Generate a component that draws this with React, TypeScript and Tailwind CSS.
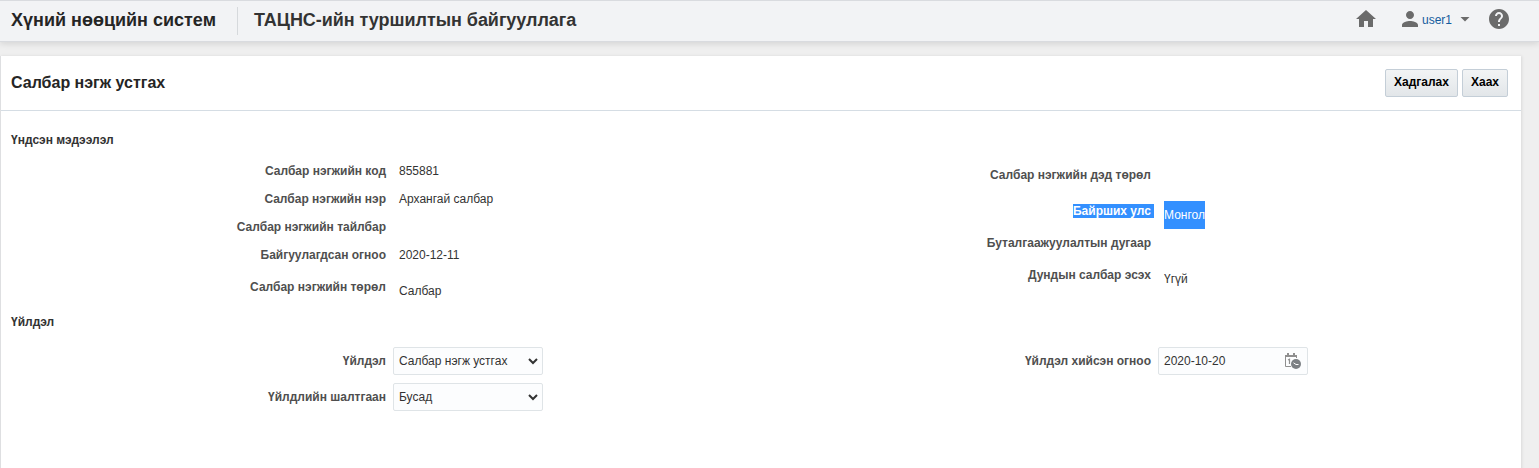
import type { ReactNode } from "react";

function Field({ label, children, height = "h-7", valueClass = "" }: {
  label: string;
  children?: ReactNode;
  height?: string;
  valueClass?: string;
}) {
  return (
    <div className={`flex items-center ${height}`}>
      <div className="flex w-[385px] shrink-0 justify-end">
        <span className="font-bold text-[#4f4f4f]">{label}</span>
      </div>
      <div className={`ml-[13px] whitespace-nowrap text-[#333333] ${valueClass}`}>{children}</div>
    </div>
  );
}

function Select({ value }: { value: string }) {
  return (
    <div className="-ml-1.5 flex h-7 w-[150px] items-center justify-between rounded-[2px] border border-[#dfe4e7] bg-[#fcfdfe] pl-[5px] pr-1">
      <span>{value}</span>
      <svg width="10" height="8" viewBox="0 0 10 8" fill="none" stroke="#333" strokeWidth="2">
        <path d="M1 2 L5 6 L9 2" />
      </svg>
    </div>
  );
}

function HomeIcon() {
  return (
    <svg className="mb-px" width="20" height="17" viewBox="2 3 20 17" fill="#6b6b6b">
      <path d="M10 20v-6h4v6h5v-8h3L12 3 2 12h3v8z" />
    </svg>
  );
}

function PersonIcon() {
  return (
    <svg className="ml-[26px]" width="16" height="16" viewBox="4 4 16 16" fill="#6b6b6b">
      <path d="M12 12c2.21 0 4-1.79 4-4s-1.79-4-4-4-4 1.79-4 4 1.79 4 4 4zm0 2c-2.67 0-8 1.34-8 4v2h16v-2c0-2.66-5.33-4-8-4z" />
    </svg>
  );
}

function HelpIcon() {
  return (
    <svg className="ml-[19px]" width="20" height="20" viewBox="2 2 20 20" fill="#6b6b6b">
      <path d="M12 2C6.48 2 2 6.48 2 12s4.48 10 10 10 10-4.48 10-10S17.52 2 12 2zm1 17h-2v-2h2v2zm2.07-7.75l-.9.92C13.45 12.9 13 13.5 13 15h-2v-.5c0-1.1.45-2.1 1.17-2.83l1.24-1.26c.37-.36.59-.86.59-1.41 0-1.1-.9-2-2-2s-2 .9-2 2H8c0-2.21 1.79-4 4-4s4 1.79 4 4c0 .88-.36 1.68-.93 2.25z" />
    </svg>
  );
}

function CalendarClockIcon() {
  return (
    <svg width="18" height="18" viewBox="0 0 18 18" fill="none">
      <path d="M7 14.5 H1.5 V3.5 H12.5 V6" stroke="#8f8f8f" />
      <path d="M1 4 H13" stroke="#8f8f8f" strokeWidth="2" />
      <path d="M4 1 V4 M10 1 V4" stroke="#8f8f8f" strokeWidth="2" />
      <path d="M4 8 L5.5 7.2 V12" stroke="#8f8f8f" strokeWidth="1.2" />
      <circle cx="12" cy="12" r="5.6" fill="#fcfdfe" />
      <circle cx="12" cy="12" r="5" fill="#7c8084" />
      <path d="M9.5 10.8 L12 12.5 H14.5" stroke="#fff" />
    </svg>
  );
}

export default function App() {
  return (
    <div className="h-[468px] w-[1539px] overflow-hidden bg-[#efefef] font-['Liberation_Sans',Arial,sans-serif] text-[12px] leading-[14px] text-[#333333]">
      <header className="flex h-[42px] items-center border-y border-[#d9dbdf] bg-[#f2f3f5] pl-[11px] shadow-[0_2px_6px_rgba(0,0,0,0.11)]">
        <div className="flex h-7 w-[227px] shrink-0 items-center border-r border-[#d6d9dc] pb-0.5">
          <h1 className="whitespace-nowrap text-[18px] font-bold leading-5 text-[#252525]">Хүний нөөцийн систем</h1>
        </div>
        <h2 className="ml-4 whitespace-nowrap pb-0.5 text-[18px] font-bold leading-5 tracking-[-0.04px] text-[#333333]">ТАЦНС-ийн туршилтын байгууллага</h2>
        <div className="ml-auto flex items-center pb-1 pr-[30px]">
          <HomeIcon />
          <PersonIcon />
          <span className="ml-1 w-[30px] pt-0.5 text-[#145c9e]">user1</span>
          <svg className="ml-2 mt-px" width="10" height="5" viewBox="0 0 10 5" fill="#6b6b6b">
            <path d="M0.500 0 H9.500 L5 4.500 Z" />
          </svg>
          <HelpIcon />
        </div>
      </header>

      <main className="mt-3.5 h-[420px] w-[1521px] border-l border-[#dedfe1] bg-white shadow-[1px_0_3px_rgba(0,0,0,0.09)]">
        <div className="flex h-[55px] items-center justify-between border-b border-[#d5dde4] pl-2.5 pr-[13px]">
          <h3 className="whitespace-nowrap pb-px text-[16px] font-bold leading-5 text-[#252525]">Салбар нэгж устгах</h3>
          <div className="flex gap-1 text-black">
            <button className="flex h-7 w-[73px] items-center justify-center whitespace-nowrap rounded-[2px] border border-[#c4ced7] bg-gradient-to-b from-[#f2f4f5] to-[#e2e6e9] pb-0.5 font-bold">Хадгалах</button>
            <button className="flex h-7 w-[46px] items-center justify-center whitespace-nowrap rounded-[2px] border border-[#c4ced7] bg-gradient-to-b from-[#f2f4f5] to-[#e2e6e9] pb-0.5 font-bold">Хаах</button>
          </div>
        </div>

        <section className="pt-[22px]">
          <h4 className="pl-2.5 font-bold">Үндсэн мэдээлэл</h4>
          <div className="flex pt-[10px]">
            <div className="w-[765px]">
              <Field label="Салбар нэгжийн код">855881</Field>
              <Field label="Салбар нэгжийн нэр">Архангай салбар</Field>
              <Field label="Салбар нэгжийн тайлбар" />
              <Field label="Байгуулагдсан огноо">2020-12-11</Field>
              <Field label="Салбар нэгжийн төрөл" height="h-9" valueClass="pt-2">Салбар</Field>
            </div>
            <div className="pt-1">
              <Field label="Салбар нэгжийн дэд төрөл" />
              <div className="flex h-10 items-end">
                <div className="flex w-[388px] justify-end pb-[11px]">
                  <span className="bg-[#3390ff] pr-[3px] font-bold text-white">Байрших улс</span>
                </div>
                <span className="ml-2.5 flex h-7 items-center bg-[#3390ff] text-white">Монгол</span>
              </div>
              <Field label="Буталгаажуулалтын дугаар" />
              <Field label="Дундын салбар эсэх" height="h-9" valueClass="pt-2">Үгүй</Field>
            </div>
          </div>
        </section>

        <section className="pt-2.5">
          <h4 className="pl-2.5 font-bold">Үйлдэл</h4>
          <div className="flex pt-[14px]">
            <div className="w-[765px]">
              <Field label="Үйлдэл" height="h-9"><Select value="Салбар нэгж устгах" /></Field>
              <Field label="Үйлдлийн шалтгаан" height="h-9"><Select value="Бусад" /></Field>
            </div>
            <div>
              <Field label="Үйлдэл хийсэн огноо" height="h-9">
                <div className="-ml-1.5 flex h-7 w-[150px] items-center justify-between rounded-[2px] border border-[#dfe4e7] bg-[#fcfdfe] pl-[5px] pr-[5px]">
                  <span>2020-10-20</span>
                  <CalendarClockIcon />
                </div>
              </Field>
            </div>
          </div>
        </section>
      </main>
    </div>
  );
}
